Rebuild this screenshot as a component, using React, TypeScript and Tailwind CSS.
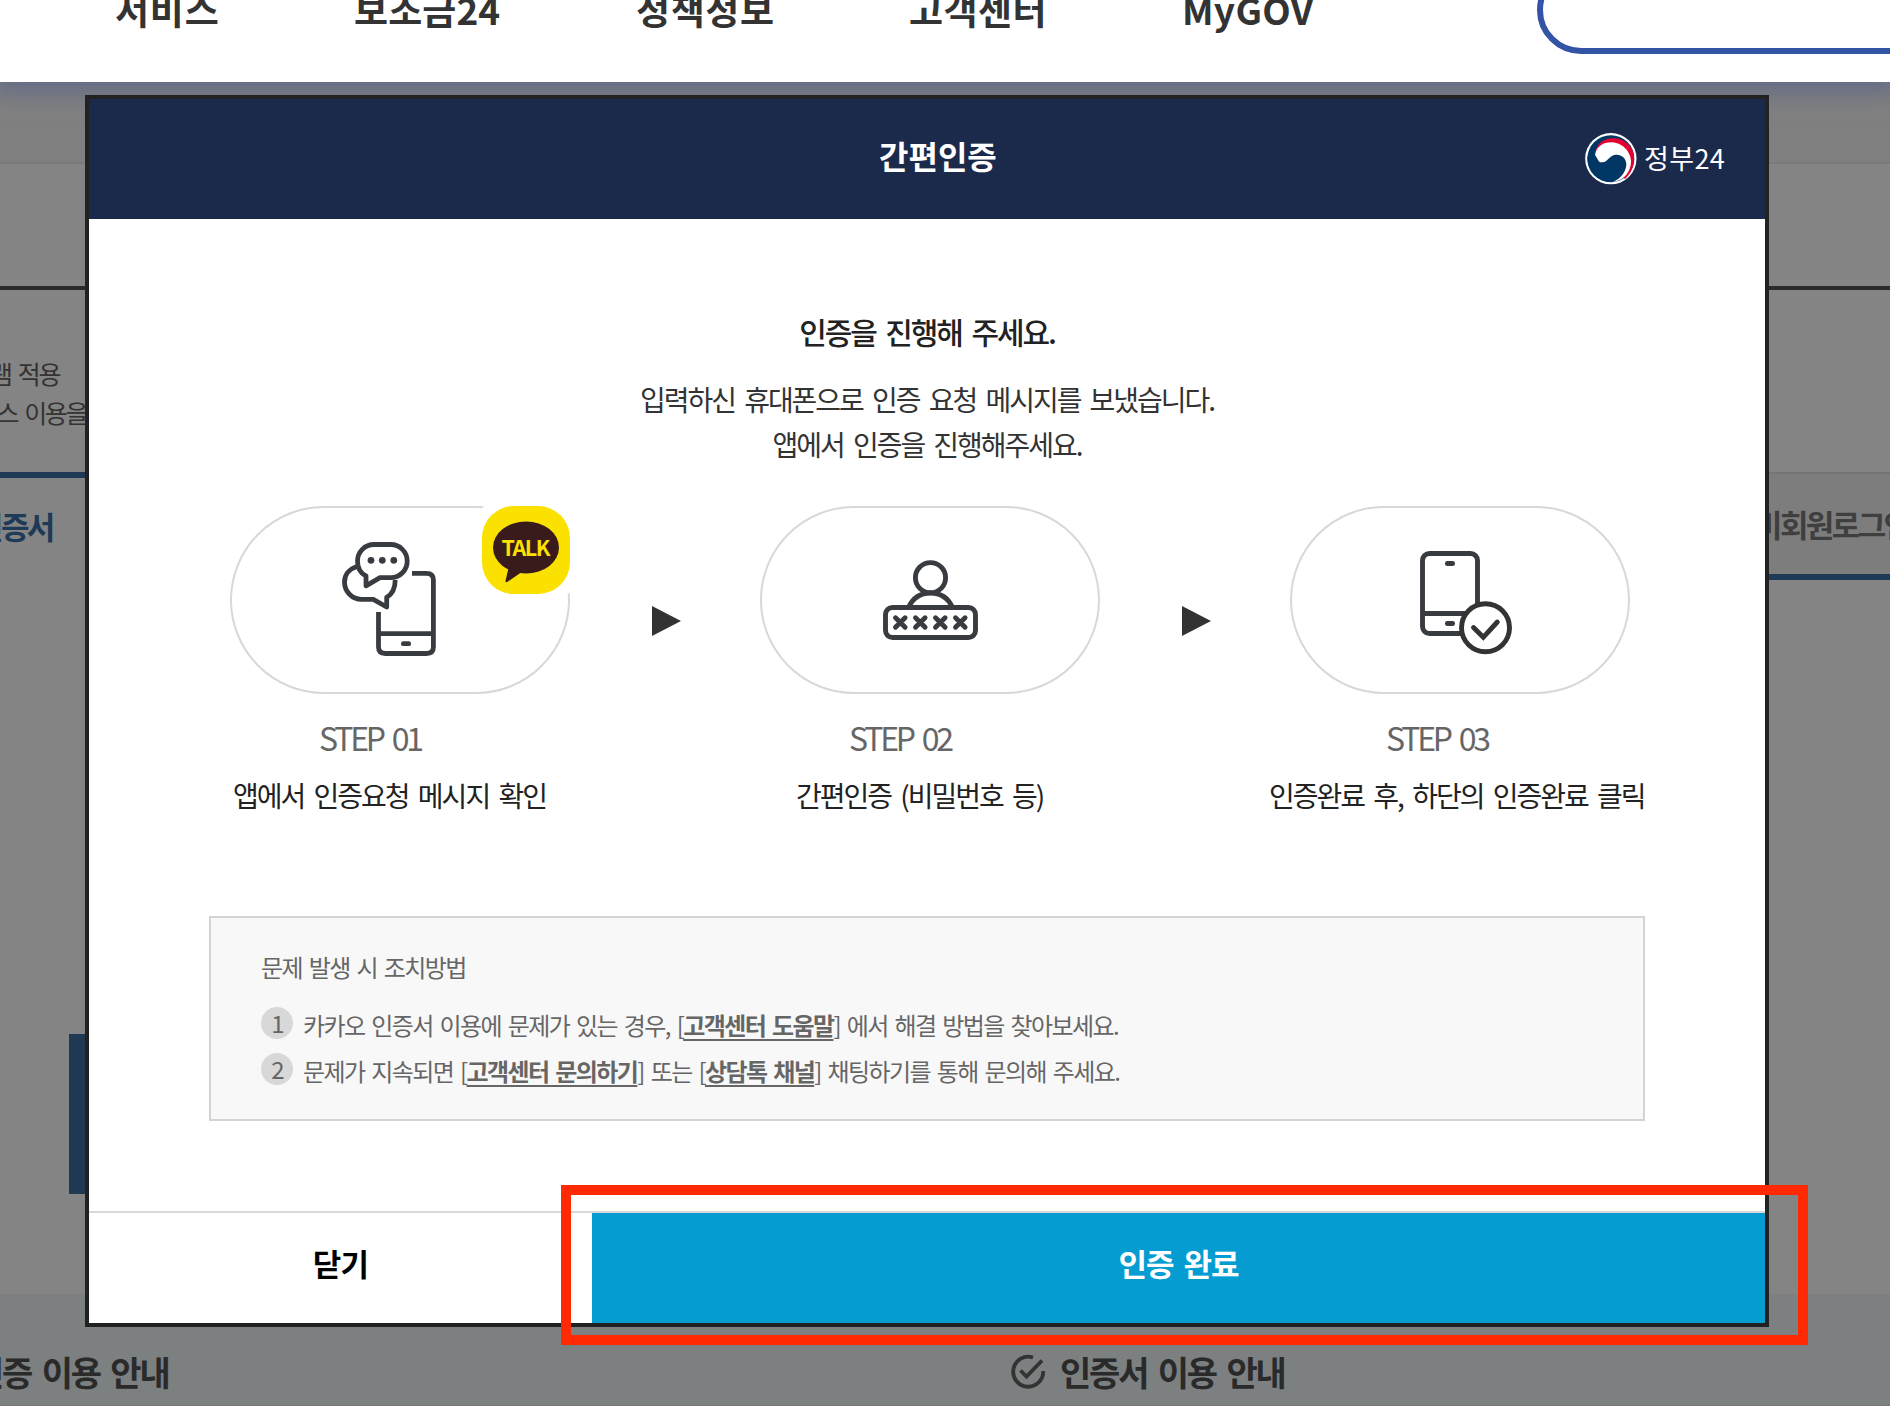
import type { ReactNode } from "react";

const NAV = [
  { label: "서비스", className: "w-[239px] tracking-[0.8px]" },
  { label: "보조금24", className: "w-[282px] tracking-[0.1px]" },
  { label: "정책정보", className: "w-[273px] tracking-[0.6px]" },
  { label: "고객센터", className: "w-[273px] tracking-[0.5px]" },
  { label: "MyGOV", className: "w-[355px] tracking-[0.3px]" },
];

function GovLogo() {
  return (
    <svg className="h-[52px] w-[52px]" viewBox="44 37 156 156">
      <circle cx="121.5" cy="114" r="77" fill="#fff" />
      <circle cx="121.5" cy="114" r="70.5" fill="#003764" />
      <path d="M76 92C82 64 106 50 133 53C166 54 192 82 191 113C191 138 182 158 164 175Z" fill="#e4002f" />
      <path d="M74 102C78 78 98 65 122 65C155 65 182 92 182 125C181 150 165 178 130 184L90 130Z" fill="#fff" />
      <path d="M74 102C73 115 82 126 97 125C112 123 115 108 132 103C150 99 167 110 168 130C168 150 155 172 128 184A70.5 70.5 0 0 1 52 105Z" fill="#003764" />
    </svg>
  );
}

function MessageIcon() {
  return (
    <svg className="ml-[110px] mt-[34px] h-[114px] w-[95px] shrink-0" viewBox="0 0 95 114" fill="none" stroke="#383c41" strokeWidth="4.8">
      <path d="M15 24.5C7 27 2.5 33 2.5 40A17 17.3 0 0 0 19.5 57.3H31.3L44.7 65V55.3C50.5 52 53.2 46 53.2 38" strokeLinejoin="round" />
      <path d="M38 35.7L24 43.8V34C18 31 15.5 25 15.5 19A16.5 16.5 0 0 1 32 2.5H48.7A16.5 16.5 0 0 1 65.2 19A16.5 16.5 0 0 1 48.7 35.7Z" strokeLinejoin="round" />
      <path d="M70 31.3H84.5Q91.4 31.3 91.4 38V105Q91.4 111.5 84.5 111.5H43.4Q36.5 111.5 36.5 105V70M36.5 91.7H91.4" />
      <g fill="#383c41" stroke="none">
        <circle cx="29" cy="18.3" r="3.4" />
        <circle cx="40.3" cy="18.3" r="3.4" />
        <circle cx="51.8" cy="18.3" r="3.4" />
        <rect x="59" y="99.3" width="10" height="4.8" rx="2.2" />
      </g>
    </svg>
  );
}

function PasswordIcon() {
  return (
    <svg className="ml-[121px] mt-[52px] h-[80px] w-[95px] shrink-0" viewBox="0 0 95 80" fill="none" stroke="#383c41" strokeWidth="4.9">
      <circle cx="47.5" cy="17.7" r="15.1" />
      <path d="M25.7 47C30 38 38 33 47.5 33S65 38 69.3 47" />
      <rect x="2.5" y="47.5" width="90" height="30" rx="7" />
      <path
        d="M12.5 57.8L22.1 67.2M22.1 57.8L12.5 67.2M32.5 57.8L42.1 67.2M42.1 57.8L32.5 67.2M52.5 57.8L62.1 67.2M62.1 57.8L52.5 67.2M72.5 57.8L82.1 67.2M82.1 57.8L72.5 67.2"
        strokeLinecap="round"
      />
    </svg>
  );
}

function DoneIcon() {
  return (
    <svg className="ml-[128px] mt-[43px] h-[104px] w-[94px] shrink-0" viewBox="0 0 94 104" fill="none" stroke="#383c41" strokeWidth="4.9">
      <rect x="2.5" y="2.5" width="55" height="80" rx="7" />
      <path d="M2.5 62.5H57.5" />
      <rect x="25" y="10" width="10" height="5" rx="2.3" fill="#383c41" stroke="none" />
      <rect x="25" y="70" width="10" height="5" rx="2.3" fill="#383c41" stroke="none" />
      <circle cx="65.5" cy="76.7" r="24" fill="#fff" stroke="#333" />
      <path d="M53.5 76.5L63.3 86.3L77.3 71" stroke="#333" strokeLinecap="round" />
    </svg>
  );
}

function TalkBadge() {
  return (
    <div className="absolute -right-[2px] -top-[2px] h-[88px] w-[88px] rounded-[4px] bg-white">
      <svg className="h-full w-full" viewBox="0 0 88 88">
        <rect width="88" height="88" rx="32" fill="#fae100" />
        <path d="M26.7 61L23.4 75.5Q24 77 26 75.5L39 66.5Z" fill="#391b1b" />
        <ellipse cx="44" cy="41.5" rx="33" ry="26" fill="#391b1b" />
        <text x="44" y="49.5" textAnchor="middle" textLength="49" fontSize="21.5" fontWeight="700" fill="#fae100" fontFamily="'Noto Sans CJK KR', sans-serif">
          TALK
        </text>
      </svg>
    </div>
  );
}

function Pill({ children }: { children: ReactNode }) {
  return <div className="relative flex h-[188px] w-[340px] items-start rounded-full border-2 border-[#d8d8d8]">{children}</div>;
}

function Arrow() {
  return (
    <svg className="mt-[100px] h-[30px] w-[29px] shrink-0" viewBox="0 0 29 30">
      <path d="M0 0L29 15L0 30Z" fill="#333" />
    </svg>
  );
}

type StepProps = { title: string; label: string; titleClass: string; labelClass: string; children: ReactNode };

function Step({ title, label, titleClass, labelClass, children }: StepProps) {
  return (
    <li className="w-[340px]">
      <Pill>{children}</Pill>
      <p className={`mt-[21px] whitespace-nowrap text-[32px] leading-[44px] tracking-[-3.2px] text-[#666] [word-spacing:5px] ${titleClass}`}>{title}</p>
      <p className={`mt-[14px] whitespace-nowrap text-[28px] leading-[44px] tracking-[-2px] text-[#222] [word-spacing:5px] ${labelClass}`}>{label}</p>
    </li>
  );
}

function NoticeItem({ no, children }: { no: number; children: ReactNode }) {
  return (
    <li className="flex h-[46px] items-start">
      <span className="flex h-8 w-8 shrink-0 items-center justify-center rounded-full bg-[#d8d8d8] text-[24px]">{no}</span>
      <span className="ml-[10px] whitespace-nowrap leading-[36px]">{children}</span>
    </li>
  );
}

function HelpLink({ children }: { children: ReactNode }) {
  return (
    <>
      [<a href="#" className="font-bold underline decoration-2 underline-offset-[4px]">{children}</a>]
    </>
  );
}

export default function App() {
  return (
    <div className="relative h-[1406px] w-[1890px] overflow-hidden bg-[#848484] font-['Noto_Sans_CJK_KR','Noto_Sans',sans-serif] text-[#222]">
      {/* Site header */}
      <header className="relative flex h-[82px] items-start bg-white pl-[115px] shadow-[0_0_24px_8px_#5f6786]">
        <nav className="-mt-[18px] flex text-[37px] font-bold leading-[54px] text-[#333]">
          {NAV.map((item) => (
            <a key={item.label} href="#" className={item.className}>{item.label}</a>
          ))}
        </nav>
        <div className="-mt-[34px] h-[88px] w-[440px] shrink-0 rounded-[44px] border-[6px] border-[#3354a5]" />
      </header>

      {/* Page behind the dialog */}
      <main>
        <div className="h-[82px] border-b-2 border-[#7a7a7a] bg-[#808080]" />
        <div className="h-[126px] border-b-4 border-[#2b2b2b]" />
        <div className="flex h-[182px] w-[87px] flex-col items-end whitespace-nowrap pt-[64px] text-[25px] leading-[39px] tracking-[-2.4px] text-[#333]">
          <span className="mr-[28px] [word-spacing:4px]">램 적용</span>
          <span className="mr-[1px] [word-spacing:4px]">스 이용을</span>
        </div>
        <div className="flex justify-between text-[31px] font-bold tracking-[-2.6px]">
          <div className="flex h-[108px] w-[200px] items-start border-t-[6px] border-[#1f3a57] pt-[25px] text-[#1f3a57]">
            <span className="-ml-[25px]">인증서</span>
          </div>
          <div className="flex h-[108px] w-[200px] items-center border-b-[6px] border-t-2 border-b-[#1f3a57] border-t-[#757575] bg-[#7d7d7d] pl-[64px] text-[#3f3f3f]">
            <span className="whitespace-nowrap">비회원로그인</span>
          </div>
        </div>
        <div className="ml-[69px] mt-[454px] h-[160px] w-[200px] bg-[#1f3a53]" />
        <div className="mt-[100px] flex h-[112px] items-start border-b border-[#777] bg-[#7c8080] pt-[53px] text-[34px] font-bold leading-[50px] tracking-[-2.2px] text-[#2a2a2a] [word-spacing:5px]">
          <span className="-ml-[27px] w-[1038px]">인증 이용 안내</span>
          <svg className="mt-[7px] h-9 w-9" viewBox="0 0 36 36" fill="none" stroke="#333" strokeWidth="3.8">
            <path d="M22 3.5A15 15 0 1 0 32.2 17" />
            <path d="M9.5 16.5L15.5 22.5L31 6.5" />
          </svg>
          <span className="ml-[13px]">인증서 이용 안내</span>
        </div>
      </main>

      {/* Dialog */}
      <section className="absolute left-[85px] top-[95px] flex h-[1232px] w-[1684px] flex-col border-4 border-[#222] bg-white">
        <div className="flex h-[120px] items-center bg-[#1b2a4b] text-white">
          <h1 className="-mt-[9px] ml-[790px] w-[706px] text-[32px] font-bold leading-[46px]">간편인증</h1>
          <GovLogo />
          <span className="-mt-[2px] ml-[7px] text-[27px] tracking-[0.4px]">정부24</span>
        </div>

        <div className="flex flex-col items-center">
          <h2 className="mt-[89px] text-[30px] font-medium leading-[46px] tracking-[-2.1px] [word-spacing:5px]">인증을 진행해 주세요.</h2>
          <p className="mt-[23px] text-center text-[28px] leading-[45px] tracking-[-2.03px] text-[#333] [word-spacing:5px]">
            입력하신 휴대폰으로 인증 요청 메시지를 보냈습니다.
            <br />
            앱에서 인증을 진행해주세요.
          </p>
        </div>

        <ul className="ml-[141px] mt-[39px] flex h-[410px] items-start">
          <Step title="STEP 01" label="앱에서 인증요청 메시지 확인" titleClass="ml-[89px]" labelClass="ml-[3px]">
            <MessageIcon />
            <TalkBadge />
          </Step>
          <li className="ml-[82px] mr-[79px]"><Arrow /></li>
          <Step title="STEP 02" label="간편인증 (비밀번호 등)" titleClass="ml-[89px]" labelClass="ml-[36px]">
            <PasswordIcon />
          </Step>
          <li className="ml-[82px] mr-[79px]"><Arrow /></li>
          <Step title="STEP 03" label="인증완료 후, 하단의 인증완료 클릭" titleClass="ml-[96px]" labelClass="-ml-[21px]">
            <DoneIcon />
          </Step>
        </ul>

        <div className="ml-[120px] h-[205px] w-[1436px] border-2 border-[#d4d4d4] bg-[#f8f8f8] pl-[50px] pt-[31px] text-[24px] tracking-[-1.59px] text-[#666] [word-spacing:3px]">
          <p className="leading-[36px]">문제 발생 시 조치방법</p>
          <ol className="mt-[22px]">
            <NoticeItem no={1}>
              카카오 인증서 이용에 문제가 있는 경우, <HelpLink>고객센터 도움말</HelpLink> 에서 해결 방법을 찾아보세요.
            </NoticeItem>
            <NoticeItem no={2}>
              문제가 지속되면 <HelpLink>고객센터 문의하기</HelpLink> 또는 <HelpLink>상담톡 채널</HelpLink> 채팅하기를 통해 문의해 주세요.
            </NoticeItem>
          </ol>
        </div>

        <div className="mt-auto flex h-[112px] border-t-2 border-[#d9d9d9] text-[31px]">
          <button className="w-[503px] pb-[9px] text-center font-bold tracking-[-0.8px] text-black">닫기</button>
          <button className="flex-1 bg-[#059dd1] pb-[9px] font-bold tracking-[-1px] text-white [word-spacing:4px]">인증 완료</button>
        </div>
      </section>

      {/* Highlight around the confirm button */}
      <div className="absolute left-[561px] top-[1185px] h-[160px] w-[1247px] border-[10px] border-[#ff2a04]" />
    </div>
  );
}
